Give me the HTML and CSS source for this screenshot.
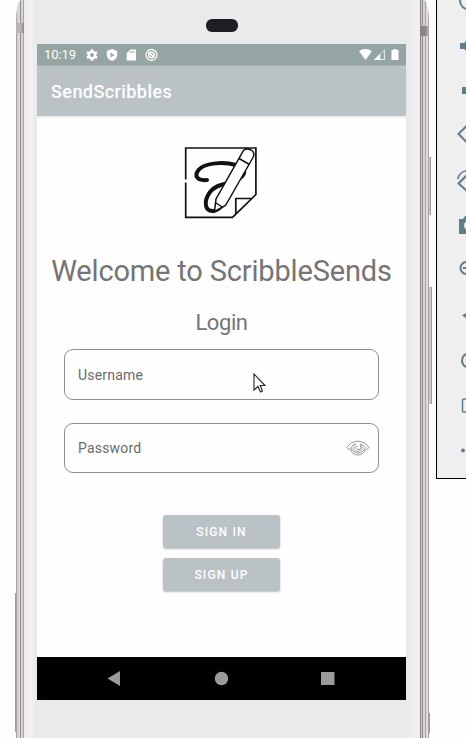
FILE: index.html
```html
<!DOCTYPE html>
<html lang="en">
<head>
<meta charset="utf-8">
<title>SendScribbles</title>
<link rel="stylesheet" href="styles.css">
</head>
<body>
<div class="device">
  <i class="side-key power"></i><i class="side-key volume"></i><i class="side-key left-key"></i><i class="side-key low-key"></i>
  <div class="bezel-top"><span class="speaker"></span></div>
  <main class="screen">
    <div class="status">
      <span class="clock">10:19</span>
      <svg class="status-icons" width="74" height="14" viewBox="0 0 74 14" fill="#fff">
        <circle cx="7" cy="7" r="3.2" fill="none" stroke="#fff" stroke-width="2.5"/>
        <path d="M7 1.2v2.3M7 10.5v2.3M2 4.1l2 1.2M10 8.7l2 1.2M2 9.9l2-1.2M10 5.3l2-1.2" stroke="#fff" stroke-width="2.6"/>
        <path d="M27 1l5.2 2v4c0 3-2.200 5-5.200 6-3-1-5.200-3-5.200-6V3z"/><path d="M25.500 4.500v5l4-2.500z" fill="#95a5a4"/>
        <path d="M45.500 1.500H51v11h-9.200V5z"/><path d="M45.300 3v2M47.200 3v2M49 3v2" stroke="#95a5a4" stroke-width=".9"/>
        <circle cx="66.500" cy="7" r="5.500" fill="none" stroke="#fff" stroke-width="1.300"/><circle cx="66.500" cy="7" r="2.800" fill="none" stroke="#fff" stroke-width="1.500"/><path d="M63.500 4l5.500 5.500" stroke="#fff" stroke-width="1.500"/>
      </svg>
      <svg class="signal-icons" width="40" height="13" viewBox="0 0 40 13" fill="#fff">
        <path d="M0 3Q6.500-1 13 3L6.500 12z"/>
        <path d="M15 12L26 1v11z" opacity=".75"/><path d="M15 12l6-6v6z"/><path d="M21.500 6.200L24.800 3v8h-3.300z" fill="#95a5a4"/>
        <path d="M32.500 2h2V1h3v1h2v10h-7z"/>
      </svg>
    </div>
    <header class="appbar">SendScribbles</header>
    <section class="content">
      <svg class="logo" width="74" height="74" viewBox="0 0 74 74" fill="none" stroke="#111" stroke-width="1.700">
        <path d="M1.700 33.500V2h70.200v46.500L48.500 71.300H1.700V36.500"/>
        <path d="M51.800 68V52.500h16"/>
        <path d="M23 34C13 35 10 30 14.500 24C21 16 41 16 52 19C64 22 62 30 52 34C43 38 32 38 26 46C19 56 21 66 30 65C36 64 40 57 44 51" stroke-width="4" stroke-linecap="round"/>
        <path d="M30.500 65.500L32 53L59.500 4.500Q63 1 68.500 5Q71 8 69 11.500L41.500 59.500Z" fill="#fff" stroke-width="1.500"/>
        <path d="M55 12.500l10.500 6M32 57l6 4" stroke-width="1.500"/>
      </svg>
      <h1>Welcome to ScribbleSends</h1>
      <h2>Login</h2>
      <div class="field">Username</div>
      <div class="field password"><span>Password</span>
        <svg width="24" height="16" viewBox="0 0 24 16" fill="none" stroke="#8d8d8d" stroke-width=".9">
          <path d="M.8 7.500Q5 1.200 11.800 1.200T23 7.500Q22 9 19.800 9.300Q17 15 11.800 15T4 9.300Q1.500 9 .8 7.500z"/><path d="M5 7.500Q7 4 10 3.700M19 7.500Q17 4.300 14 3.700M5 7.500Q6 13 11.800 13T19 7.500"/><path d="M9.500 5Q5.500 8 8.500 10.500Q12 12.800 15.500 10Q17.500 7 14.300 5Q16 8 13.500 9.500Q10.500 10.300 9.800 8Q9.500 6.500 11.500 5.800"/>
        </svg>
      </div>
      <button>SIGN IN</button>
      <button>SIGN UP</button>
    </section>
    <nav class="nav">
      <svg width="369" height="43" viewBox="0 0 369 43" fill="#9b9b9b"><path d="M70.500 21.500L83 14v15z"/><circle cx="184.500" cy="21.500" r="6.700"/><path d="M284 15h13.500v13H284z"/></svg>
    </nav>
  </main>
</div>
<aside class="toolbar">
  <svg viewBox="0 0 24 45"><circle cx="12" cy="22.500" r="9"/></svg>
  <svg viewBox="0 0 24 45"><path class="solid" d="M3 20h4l6-5v16l-6-5H3z"/></svg>
  <svg viewBox="0 0 24 45"><path class="solid" d="M5 19h12v7H5z"/></svg>
  <svg viewBox="0 0 24 45"><path d="M1.500 21l8-8 9 9-8 8z"/></svg>
  <svg viewBox="0 0 24 45"><path d="M1.500 25.500l8-8 9 8-8 8z"/><path d="M.8 21Q2 14 10 12.500" stroke-width="1.500"/></svg>
  <svg viewBox="0 0 24 45"><path class="solid" d="M2 16h4l2-3h9v18H2z"/><circle cx="11" cy="22.500" r="4" fill="#efefef" stroke="none"/></svg>
  <svg viewBox="0 0 24 45"><circle cx="9.500" cy="20" r="6"/><path d="M6 20h7"/></svg>
  <svg viewBox="0 0 24 45"><path class="solid" d="M5 22.500l11-7v14z"/></svg>
  <svg viewBox="0 0 24 45"><circle cx="12" cy="22.500" r="7"/></svg>
  <svg viewBox="0 0 24 45"><rect x="5.500" y="16" width="14" height="13" rx="1" stroke-width="1.500"/></svg>
  <svg viewBox="0 0 24 45"><circle class="solid" cx="6" cy="22.500" r="1.900"/></svg>
</aside>
<svg class="cursor" width="14" height="21" viewBox="0 0 14 21"><path d="M1 1v16l4-3.500 2.500 5.500 2-1-2.300-5.500H12z" fill="#fff" stroke="#222" stroke-width="1.100"/></svg>
</body>
</html>
```
FILE: styles.css
```css
* { box-sizing: border-box; }
body {
  margin: 0;
  width: 466px;
  height: 738px;
  display: flex;
  align-items: flex-start;
  position: relative;
  overflow: hidden;
  background: #fefefe;
  font-family: Roboto, "Liberation Sans", sans-serif;
}
.device {
  position: relative;
  flex: none;
  width: 413px;
  height: 738px;
  margin-left: 16px;
  padding: 0 23px 0 21px;
  border-radius: 5px 5px 0 0 / 22px 22px 0 0;
  background: linear-gradient(to right,
    #a8a2a3 0 1px, #d5d0d1 1px 3px, #e0dddd 3px 4px, #918b8d 4px 5px, #d8d3d4 5px 7px, #aaa3a5 7px 8px, #ededee 8px, #f0f0f1 16px, #e9eaeb 19px,
    #e9eaeb 391px, #f0f0f1 399px, #eeeeef 404px, #8c8687 404px 405px, #cbc5c6 405px 406px, #969091 406px 407px, #d8d2d4 407px 409px, #aca5a7 409px 410px, #e0dadc 410px 412px, #aaa3a5 412px);
}
.device::before, .device::after {
  content: "";
  position: absolute;
  top: 23px;
  left: 0;
  width: 8px;
  height: 10px;
  background: linear-gradient(to right, #bab5b5 60%, #8b8485);
}
.device::after { left: 404px; top: 26px; width: 9px; background: linear-gradient(to right, #8b8485 50%, #b5b0b0); }
.side-key { position: absolute; left: 413px; background: #c9c7c7; border-right: 1px solid #a09b9b; }
.power { top: 157px; width: 2px; height: 58px; }
.volume { top: 287px; width: 3px; height: 117px; }
.left-key { left: -1px; top: 593px; width: 1px; height: 139px; }
.low-key { top: 713px; width: 1px; height: 20px; }
.bezel-top { height: 44px; padding-top: 19px; }
.speaker { display: block; width: 32px; height: 13px; margin-left: 169px; border-radius: 6px; background: #1d1f22; }
.screen { width: 369px; height: 656px; display: flex; flex-direction: column; background: #fefefe; }
.status { height: 22px; flex: none; display: flex; align-items: center; padding: 0 7px; background: #95a5a4; border-bottom: 1px solid #a5b2b3; color: #fff; }
.clock { width: 41px; font-size: 13px; line-height: 22px; letter-spacing: -.1px; white-space: nowrap; }
.signal-icons { margin-left: auto; }
.appbar { height: 50px; flex: none; padding-left: 14px; line-height: 51px; background: #bac2c5; color: #fff; font-size: 18px; font-weight: 500; letter-spacing: .42px; }
.content { flex: 1; border-top: 2px solid #efefef; display: flex; flex-direction: column; align-items: center; color: #757575; }
.logo { margin: 28px 0 0; flex: none; position: relative; left: -1px; }
h1 { margin: 33px 0 0; height: 36px; font-size: 29px; line-height: 36px; font-weight: 400; letter-spacing: -.17px; white-space: nowrap; }
h2 { margin: 20px 0 0; height: 28px; font-size: 22px; line-height: 28px; font-weight: 400; letter-spacing: -.4px; }
.field { width: 315px; height: 51px; flex: none; margin-top: 12px; padding: 0 13px; border: 1px solid #8f8f8f; border-radius: 9px; font-size: 14px; line-height: 50px; letter-spacing: .2px; color: #6b6b6b; }
.password { display: flex; align-items: center; justify-content: space-between; margin-top: 23px; height: 50px; padding-right: 8px; }
button { width: 117px; height: 33px; flex: none; margin: 42px 0 0; padding: 1px 0 0; border: 0; border-radius: 3px; background: #bac2c5; box-shadow: 0 1px 2px #0004; color: #fff; font: 500 12px/33px Roboto, sans-serif; letter-spacing: 1.2px; }
button + button { margin-top: 10px; }
.nav { height: 43px; flex: none; background: #000; }
.nav svg { display: block; }
.toolbar { width: 31px; height: 479px; margin-left: 7px; flex: none; padding-left: 20px; overflow: hidden; display: flex; flex-direction: column; background: #efefef; border: solid #000; border-width: 0 0 1px 1px; }
.toolbar svg { width: 24px; height: 45px; flex: none; fill: none; stroke: #607d8b; stroke-width: 2; }
.toolbar svg:first-child { margin-top: -22px; }
.toolbar .solid { fill: #607d8b; stroke: none; }
.cursor { position: absolute; left: 253px; top: 373px; }
```
